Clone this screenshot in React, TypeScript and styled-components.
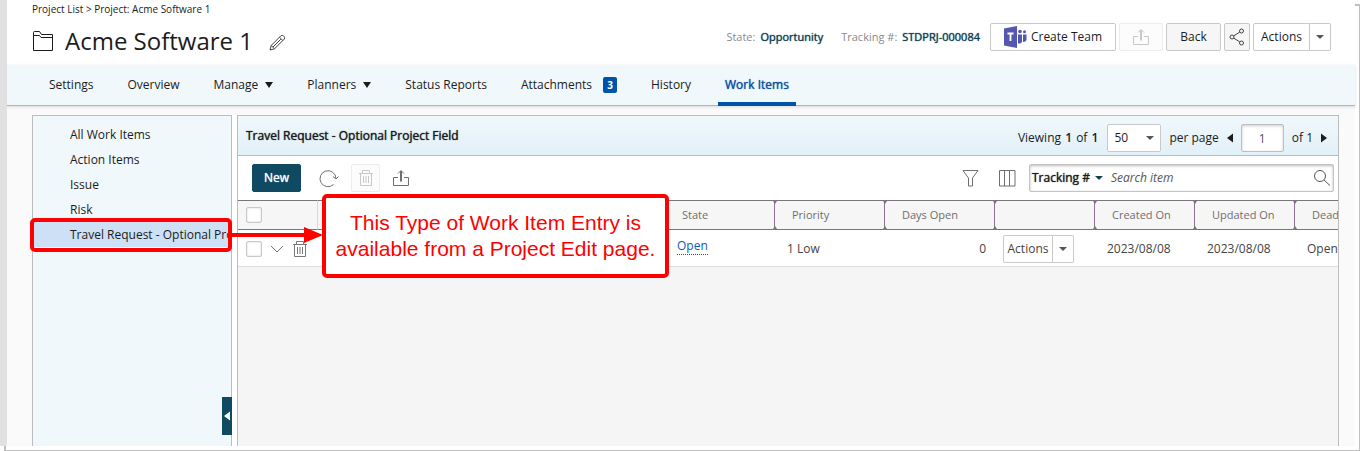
import React from "react";
import styled, { createGlobalStyle, css } from "styled-components";

const GlobalStyle = createGlobalStyle`
  *, *::before, *::after { box-sizing: border-box; }
  body {
    margin: 0;
    background: #fff;
    color: #1c1c1c;
    font: 12px/16px "Open Sans", "Liberation Sans", sans-serif;
  }
  button, input, select { font: inherit; color: inherit; }
  button { cursor: pointer; }
`;

// Emphasis that keeps the regular weight's widths.
const emphasis = css`
  font-weight: 400;
  text-shadow: 0 0 1px currentColor;
`;

const Frame = styled.div`
  position: relative;
  display: flex;
  min-height: 100vh;
  padding: 0 5px 5px 0;
  &::before {
    content: "";
    position: absolute;
    inset: 4px 0 0 4px;
    border: 1px solid #bfbfbf;
    border-width: 2px 1px 1px 2px;
  }
`;

const Shell = styled.div`
  position: relative;
  flex: 1;
  min-width: 0;
  display: flex;
  flex-direction: column;
  border-left: 7px solid #e1e1e1;
  background: #fafafa;
`;

const Header = styled.header`
  display: flex;
  justify-content: space-between;
  height: 65px;
  padding: 0 24px 0 25px;
  background: #fff;
`;

const Breadcrumb = styled.nav`
  padding-top: 1px;
  font-size: 10px;
  line-height: 16px;
  a { color: inherit; text-decoration: none; }
`;

const TitleRow = styled.div`
  display: flex;
  align-items: center;
  gap: 12px;
  height: 48px;
`;

const Title = styled.h1`
  margin: 0;
  font-size: 24px;
  line-height: 32px;
  font-weight: 400;
`;

const PlainButton = styled.button`
  display: inline-flex;
  align-items: center;
  padding: 0;
  border: 0;
  background: none;
`;

const EditButton = styled(PlainButton)`
  margin-left: 4px;
  padding-top: 2px;
  color: #444;
`;

const HeaderTools = styled.div`
  display: flex;
  align-items: center;
  gap: 3px;
  height: 74px;
`;

const Meta = styled.dl`
  display: flex;
  gap: 18px;
  margin: 0 7px 0 0;
  font-size: 11px;
  div { display: flex; gap: 5px; }
  dt { color: #8a8a8a; }
  dd { margin: 0; color: #123f52; ${emphasis} }
`;

const Button = styled.button<{ $width: number; $tone?: "grey" | "primary" | "faint" }>`
  display: inline-flex;
  align-items: center;
  justify-content: center;
  gap: 4px;
  width: ${(p) => p.$width}px;
  height: 28px;
  padding: 0;
  border: 1px solid #c9c9c9;
  border-radius: 2px;
  background: #fff;
  white-space: nowrap;
  ${(p) => p.$tone === "grey" && css`background: #f6f6f6;`}
  ${(p) => p.$tone === "faint" && css`background: #fcfcfc; border-color: #ececec; color: #c8c8c8;`}
  ${(p) => p.$tone === "primary" && css`background: #0f4a62; border-color: #0f4a62; color: #fff; ${emphasis}`}
`;

const Split = styled.div`
  display: inline-flex;
  vertical-align: middle;
  button:first-child { border-radius: 2px 0 0 2px; }
  button:last-child { border-radius: 0 2px 2px 0; border-left: 0; }
`;

const Tabs = styled.nav`
  position: relative;
  display: flex;
  gap: 20px;
  height: 41px;
  padding-left: 35px;
  border-bottom: 1px solid #a3b8c2;
  background: #f0f8fc;
  box-shadow: 0 1px 3px #dadada;
`;

const Tab = styled.a<{ $active?: boolean }>`
  display: flex;
  align-items: center;
  gap: 7px;
  height: 41px;
  padding: 2px 7px 4px;
  color: inherit;
  text-decoration: none;
  white-space: nowrap;
  ${(p) => p.$active && css`
    padding-bottom: 0;
    border-bottom: 4px solid #0054a8;
    color: #0f4f9e;
    ${emphasis}
  `}
`;

const Badge = styled.span`
  width: 14px;
  margin-left: 4px;
  border-radius: 2px;
  background: #0054a8;
  color: #fff;
  font-size: 10px;
  font-weight: 700;
  text-align: center;
`;

const Workspace = styled.div`
  flex: 1;
  display: flex;
  margin: 9px 16px 0 25px;
`;

const Sidebar = styled.aside`
  position: relative;
  flex: 0 0 200px;
  min-width: 0;
  padding-top: 6px;
  border: 1px solid #bdbdbd;
  border-bottom: 0;
  background: #f0f8fc;
`;

const SideList = styled.ul`
  margin: 0;
  padding: 0;
  list-style: none;
`;

const SideItem = styled.li<{ $selected?: boolean }>`
  position: relative;
  background: ${(p) => (p.$selected ? "#cde0f5" : "transparent")};
  a {
    display: block;
    padding-left: 37px;
    overflow: hidden;
    line-height: 25px;
    color: inherit;
    text-decoration: none;
    white-space: nowrap;
  }
`;

const Highlight = styled.div`
  position: absolute;
  z-index: 2;
  inset: -4px -1px -5px -3px;
  border: 4px solid #f00;
  border-radius: 5px;
  pointer-events: none;
`;

const Arrow = styled.svg`
  position: absolute;
  z-index: 2;
  top: 4px;
  left: 197px;
`;

const Callout = styled.p`
  position: absolute;
  z-index: 3;
  top: -28px;
  left: 289px;
  width: 347px;
  height: 84px;
  margin: 0;
  padding: 12px 0;
  border: 4px solid #f00;
  border-radius: 5px;
  background: #fff;
  color: #f00;
  font: 21px/26px "Liberation Sans", Arial, sans-serif;
  text-align: center;
  white-space: nowrap;
`;

const Collapse = styled.button`
  position: absolute;
  right: -1px;
  bottom: 11px;
  display: flex;
  align-items: center;
  width: 10px;
  height: 38px;
  padding: 0 2px;
  border: 0;
  background: #0f4a62;
`;

const Gutter = styled.div`
  flex: 0 0 5px;
  background: #fff;
`;

const Main = styled.main`
  flex: 1;
  min-width: 0;
  border: 1px solid #bdbdbd;
  border-bottom: 0;
  background: #f5f5f5;
  overflow: hidden;
`;

const PanelHead = styled.div`
  display: flex;
  align-items: center;
  justify-content: space-between;
  height: 40px;
  padding: 0 11px 0 8px;
  border-bottom: 1px solid #bdbdbd;
  background: linear-gradient(#f0f8fc, #e2f0f8);
  h2 { margin: 0; font-size: 12px; ${emphasis} }
`;

const Pager = styled.div`
  display: flex;
  align-items: center;
  gap: 8px;
  padding-top: 5px;
  b { margin: 0 1px; font-weight: 600; }
`;

const SelectBox = styled.span`
  display: inline-grid;
  align-items: center;
  select, svg { grid-area: 1 / 1; }
  select {
    appearance: none;
    width: 54px;
    height: 28px;
    padding: 0 6px;
    border: 1px solid #c9c9c9;
    border-radius: 2px;
    background: #fff;
  }
  svg { justify-self: end; margin-right: 7px; pointer-events: none; }
`;

const PageInput = styled.input`
  width: 43px;
  height: 28px;
  border: 1px solid #bfbfbf;
  border-radius: 2px;
  background: #fff;
  box-shadow: inset 0 1px 3px #ccc;
  color: #555;
  text-align: center;
`;

const Toolbar = styled.div`
  display: flex;
  align-items: center;
  height: 44px;
  padding: 0 4px 0 14px;
  background: #fff;
  color: #6f6f6f;
`;

const ToolGroup = styled.div`
  display: flex;
  align-items: center;
  flex: 1;
  gap: 12px;
  button:nth-child(2) { margin-left: 6px; }
`;

const RightTools = styled.div`
  display: flex;
  align-items: center;
  gap: 20px;
`;

const Search = styled.form`
  display: flex;
  align-items: center;
  width: 305px;
  height: 28px;
  margin-left: -7px;
  padding: 0 2px;
  border: 1px solid #c4c4c4;
  border-radius: 2px;
  box-shadow: inset 0 1px 3px #bbb;
  color: #1c1c1c;
  input {
    flex: 1;
    min-width: 0;
    padding: 0 0 0 8px;
    border: 0;
    outline: 0;
    background: none;
    font-style: italic;
  }
  input::placeholder { color: #555; opacity: 1; }
`;

const FieldButton = styled(PlainButton)`
  gap: 5px;
  ${emphasis}
`;

const Table = styled.table`
  width: 100%;
  table-layout: fixed;
  border-collapse: separate;
  border-spacing: 0;
  color: #444;
  white-space: nowrap;
`;

const HeadCell = styled.th<{ $plain?: boolean }>`
  position: relative;
  height: 30px;
  padding: 0 0 0 ${(p) => (p.$plain ? 8 : 17)}px;
  border-top: 1px solid #777;
  border-bottom: 1px solid #777;
  border-right: 1px solid ${(p) => (p.$plain ? "#d8d8d8" : "#8f6f93")};
  background: #f6f6f6;
  color: #6f6f6f;
  font-size: 11px;
  font-weight: 400;
  text-align: left;
  &:last-child { border-right: 0; }
  ${(p) => !p.$plain && css`
    &:not(:last-child)::before, &:not(:last-child)::after {
      content: "";
      position: absolute;
      right: -3px;
      border: 2px solid transparent;
      border-width: 0 2px;
      z-index: 1;
    }
    &:not(:last-child)::before { top: 0; border-top: 3px solid #777; }
    &:not(:last-child)::after { bottom: 0; border-bottom: 3px solid #777; }
  `}
`;

const Cell = styled.td<{ $kind?: "number" | "control" | "link" }>`
  height: 37px;
  padding: 2px 0 0 12px;
  border-bottom: 1px solid #dcdcdc;
  background: #fff;
  ${(p) => p.$kind === "number" && css`padding-right: 9px; text-align: right;`}
  ${(p) => p.$kind === "control" && css`padding-left: 8px;`}
  ${(p) => p.$kind === "link" && css`padding: 0 0 4px 12px;`}
`;

const CheckCell = styled.div`
  display: flex;
  align-items: center;
  gap: 8px;
  color: #777;
`;

const Checkbox = styled.input`
  appearance: none;
  display: block;
  flex: none;
  width: 16px;
  height: 16px;
  margin: 0;
  border: 1px solid #c9c9c9;
  border-radius: 2px;
  background: #fff;
  box-shadow: inset 0 0 2px #ccc;
`;

const StateLink = styled.a`
  display: inline-block;
  border-bottom: 1px dotted #0a5cb8;
  color: #0a5cb8;
  text-decoration: none;
`;

const Caret = ({ w = 8, h = 5, fill = "#1c1c1c" }: { w?: number; h?: number; fill?: string }) => (
  <svg width={w} height={h} viewBox="0 0 8 5" preserveAspectRatio="none" aria-hidden="true">
    <path d="M0 0h8L4 5z" fill={fill} />
  </svg>
);

const SideCaret = ({ dir, fill = "#1c1c1c" }: { dir: "left" | "right"; fill?: string }) => (
  <svg width="6" height="10" viewBox="0 0 6 10" aria-hidden="true">
    <path d={dir === "left" ? "M6 .5v9L0 5z" : "M0 .5v9L6 5z"} fill={fill} />
  </svg>
);

type IconProps = { w: number; h: number; d: string };
const Icon = ({ w, h, d }: IconProps) => (
  <svg width={w} height={h} viewBox={`0 0 ${w} ${h}`} fill="none" stroke="currentColor" aria-hidden="true">
    <path d={d} />
  </svg>
);

const FolderIcon = () => <Icon w={21} h={20} d="M1.500 19.500V1.500Q1.500.500 2.500.500H7.500L9.500 3.500H20.500V19.500zM1.500 4.500H7.500L9 6.500H20.500" />;
const PencilIcon = () => <Icon w={17} h={17} d="M1 16l1.200-4.500L12 1.700q1.200-1 2.500.2l.6.600q1.200 1.300.2 2.500L5.500 14.800zM2.200 11.500l3.300 3.300M10.500 3.200l3.300 3.300M4 13l7.800-7.800" />;
const ShareUpIcon = () => <Icon w={18} h={18} d="M6 8.500H1.500v8h15v-8H12M9.500 12.500V2M8.500 12.500V2M6 4.500L9 1.500 12 4.500" />;
const ShareIcon = () => (
  <svg width="16" height="18" viewBox="0 0 16 18" fill="none" stroke="#444" aria-hidden="true">
    <circle cx="3" cy="9" r="2" />
    <circle cx="12.500" cy="3" r="2" />
    <circle cx="12.500" cy="15" r="2" />
    <path d="M4.700 7.900l6.100-3.800M4.700 10.100l6.100 3.800" />
  </svg>
);
const TrashIcon = () => <Icon w={16} h={18} d="M1 4.500h14M4.500 4V1.500h7V4M2.500 4.500v12h11v-12M5.500 7v7M8 7v7M10.500 7v7" />;
const RefreshIcon = () => <Icon w={20} h={20} d="M14.500 16.500A8 8 0 1 1 17 10.500M14 8.500l3 2.500 2.500-2.500" />;
const FilterIcon = () => <Icon w={17} h={17} d="M1 .5h15L10.500 8v8h-4V8z" />;
const ColumnsIcon = () => <Icon w={17} h={17} d="M.5.5h15.500v15.500H.5zM5.500 .5v15.500M10.500.5v15.500" />;
const SearchIcon = () => (
  <svg width="18" height="18" viewBox="0 0 18 18" fill="none" stroke="#555" aria-hidden="true">
    <circle cx="7" cy="7" r="5.500" />
    <path d="M11 11l6 5.500" />
  </svg>
);
const ChevronIcon = () => <Icon w={14} h={8} d="M1 1l6 6 6-6" />;

const TeamsIcon = () => (
  <svg width="23" height="22" viewBox="0 0 23 22" aria-hidden="true">
    <g fill="#5558af">
      <path d="M0 2.500L13 0v22L0 19.500z" />
      <circle cx="16" cy="5.500" r="1.800" />
      <circle cx="20.500" cy="5.800" r="1.500" />
      <path d="M14 8.500h4V16q-1 2-4 1.500zM19 8.500h3.500V14q-.5 2-3.500 2z" />
    </g>
    <path d="M3.500 7.500h6M6.500 7.500v7.500" stroke="#fff" strokeWidth="1.800" fill="none" />
  </svg>
);

const tabs = [
  { label: "Settings" },
  { label: "Overview" },
  { label: "Manage", menu: true },
  { label: "Planners", menu: true },
  { label: "Status Reports" },
  { label: "Attachments", count: 3 },
  { label: "History" },
  { label: "Work Items", active: true },
];

const sideItems = ["All Work Items", "Action Items", "Issue", "Risk"];

// The last column takes whatever width is left.
const columnWidths = [80, 347, 110, 110, 110, 100, 100, 100];

const ActionsSplit = ({ width }: { width: number }) => (
  <Split>
    <Button $width={width}>Actions</Button>
    <Button $width={21} aria-label="More actions">
      <Caret fill="#555" h={4} />
    </Button>
  </Split>
);

export default function App() {
  return (
    <Frame>
      <GlobalStyle />
      <Shell>
        <Header>
          <div>
            <Breadcrumb aria-label="Breadcrumb">
              <a href="#projects">Project List</a> &gt; <a href="#project">Project: Acme Software 1</a>
            </Breadcrumb>
            <TitleRow>
              <FolderIcon />
              <Title>Acme Software 1</Title>
              <EditButton aria-label="Edit title">
                <PencilIcon />
              </EditButton>
            </TitleRow>
          </div>
          <HeaderTools>
            <Meta>
              <div><dt>State:</dt><dd>Opportunity</dd></div>
              <div><dt>Tracking #:</dt><dd>STDPRJ-000084</dd></div>
            </Meta>
            <Button $width={126}><TeamsIcon />Create Team</Button>
            <Button $width={44} $tone="faint" aria-label="Export" disabled><ShareUpIcon /></Button>
            <Button $width={55} $tone="grey">Back</Button>
            <Button $width={26} $tone="grey" aria-label="Share"><ShareIcon /></Button>
            <ActionsSplit width={57} />
          </HeaderTools>
        </Header>

        <Tabs aria-label="Project sections">
          {tabs.map((t) => (
            <Tab key={t.label} href="#tab" $active={t.active}>
              {t.label}
              {t.menu && <Caret h={6} />}
              {t.count && <Badge>{t.count}</Badge>}
            </Tab>
          ))}
        </Tabs>

        <Workspace>
          <Sidebar>
            <SideList>
              {sideItems.map((s) => (
                <SideItem key={s}><a href="#items">{s}</a></SideItem>
              ))}
              <SideItem $selected>
                <a href="#items">Travel Request - Optional Project Field</a>
                <Highlight />
                <Arrow width="93" height="18" viewBox="0 0 93 18" aria-hidden="true">
                  <path d="M0 7h74V1l19 8-19 8v-6H0z" fill="#f00" />
                </Arrow>
                <Callout>
                  This Type of Work Item Entry is<br />available from a Project Edit page.
                </Callout>
              </SideItem>
            </SideList>
            <Collapse aria-label="Collapse sidebar"><SideCaret dir="left" fill="#fff" /></Collapse>
          </Sidebar>
          <Gutter />
          <Main>
            <PanelHead>
              <h2>Travel Request - Optional Project Field</h2>
              <Pager>
                <span>Viewing <b>1</b> of <b>1</b></span>
                <SelectBox>
                  <select aria-label="Items per page" defaultValue="50"><option>50</option></select>
                  <Caret fill="#555" h={4} />
                </SelectBox>
                <span>per page</span>
                <PlainButton aria-label="Previous page"><SideCaret dir="left" /></PlainButton>
                <PageInput aria-label="Page" defaultValue="1" />
                <span>of 1</span>
                <PlainButton aria-label="Next page"><SideCaret dir="right" /></PlainButton>
              </Pager>
            </PanelHead>

            <Toolbar>
              <ToolGroup>
                <Button $width={49} $tone="primary">New</Button>
                <PlainButton aria-label="Refresh"><RefreshIcon /></PlainButton>
                <Button $width={29} $tone="faint" aria-label="Delete" disabled><TrashIcon /></Button>
                <PlainButton aria-label="Export"><ShareUpIcon /></PlainButton>
              </ToolGroup>
              <RightTools>
                <PlainButton aria-label="Filter"><FilterIcon /></PlainButton>
                <PlainButton aria-label="Columns"><ColumnsIcon /></PlainButton>
                <Search>
                  <FieldButton type="button">Tracking #<Caret h={4} fill="#123f52" /></FieldButton>
                  <input aria-label="Search item" placeholder="Search item" />
                  <PlainButton type="button" aria-label="Search"><SearchIcon /></PlainButton>
                </Search>
              </RightTools>
            </Toolbar>

            <Table>
              <colgroup>
                {columnWidths.map((w, i) => <col key={i} width={w} />)}
                <col />
              </colgroup>
              <thead>
                <tr>
                  <HeadCell $plain>
                    <Checkbox type="checkbox" aria-label="Select all" />
                  </HeadCell>
                  <HeadCell />
                  <HeadCell>State</HeadCell>
                  <HeadCell>Priority</HeadCell>
                  <HeadCell>Days Open</HeadCell>
                  <HeadCell />
                  <HeadCell>Created On</HeadCell>
                  <HeadCell>Updated On</HeadCell>
                  <HeadCell>Deadline</HeadCell>
                </tr>
              </thead>
              <tbody>
                <tr>
                  <Cell $kind="control">
                    <CheckCell>
                      <Checkbox type="checkbox" aria-label="Select row" />
                      <PlainButton aria-label="Expand row"><ChevronIcon /></PlainButton>
                      <PlainButton aria-label="Delete row"><TrashIcon /></PlainButton>
                    </CheckCell>
                  </Cell>
                  <Cell />
                  <Cell $kind="link"><StateLink href="#state">Open</StateLink></Cell>
                  <Cell>1 Low</Cell>
                  <Cell $kind="number">0</Cell>
                  <Cell $kind="control"><ActionsSplit width={50} /></Cell>
                  <Cell>2023/08/08</Cell>
                  <Cell>2023/08/08</Cell>
                  <Cell>Open</Cell>
                </tr>
              </tbody>
            </Table>
          </Main>
        </Workspace>
      </Shell>
    </Frame>
  );
}
